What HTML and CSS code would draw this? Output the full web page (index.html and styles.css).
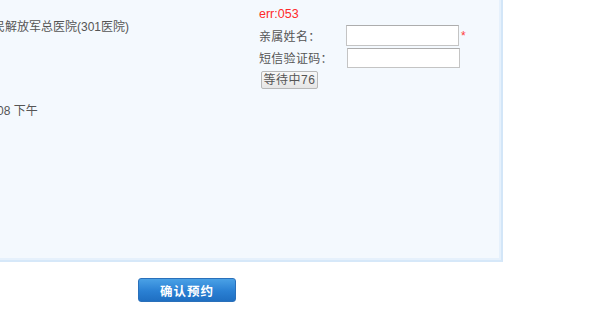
FILE: index.html
```html
<!DOCTYPE html>
<html>
<head>
<meta charset="utf-8">
<link rel="stylesheet" href="styles.css">
</head>
<body>
<div class="panel">
  <div class="left-col">
    <div class="info hospital"><span class="shift-a">中国人民解放军总医院(301医院)</span></div>
    <div class="info date"><span class="shift-b">2015-06-08 下午</span></div>
  </div>
  <div class="right-col">
    <div class="err">err:053</div>
    <div class="field">
      <label class="lbl">亲属姓名：</label>
      <input class="txt" type="text">
      <span class="req">*</span>
    </div>
    <div class="field">
      <label class="lbl">短信验证码：</label>
      <input class="txt txt-code" type="text">
    </div>
    <button class="wait-btn" type="button">等待中76</button>
  </div>
</div>
<div class="actions">
  <button class="confirm-btn" type="button">确认预约</button>
</div>
</body>
</html>
```
FILE: styles.css
```css
html, body {
  margin: 0;
  padding: 0;
  background: #ffffff;
  font-family: "Liberation Sans", "Noto Sans CJK SC", sans-serif;
  font-size: 12px;
  color: #555555;
  overflow: hidden;
}

.panel {
  display: flex;
  width: 501px;
  height: 260px;
  background: #f4f9fe;
  border-right: 2px solid #d3e6f8;
  border-bottom: 2px solid #d6e8f9;
  box-shadow: inset -2px -2px 0 #e6f1fc;
}

.left-col {
  width: 266px;
  margin-left: -7px;
  flex: none;
}

.info {
  line-height: 18px;
  white-space: nowrap;
}

.hospital {
  margin-top: 18px;
}

.date {
  margin-top: 66px;
}

.shift-a {
  display: inline-block;
  margin-left: -36px;
}

.shift-b {
  display: inline-block;
  margin-left: -44px;
}

.right-col {
  display: flex;
  flex-direction: column;
  align-items: flex-start;
  padding-top: 6px;
}

.err {
  color: #ff2a2a;
  font-size: 12.5px;
  line-height: 16px;
  margin-bottom: 3px;
}

.field {
  display: flex;
  align-items: center;
  height: 21px;
  margin-bottom: 1px;
}

.lbl {
  width: 87px;
  line-height: 21px;
  font-family: "Noto Sans CJK SC", sans-serif;
  font-size: 12px;
  letter-spacing: 0.3px;
}

.txt {
  box-sizing: border-box;
  width: 113px;
  height: 21px;
  margin: 0;
  padding: 0 2px;
  border: 1px solid #c4c4c4;
  border-top-color: #adadad;
  background: #ffffff;
}

.txt-code {
  margin-left: 1px;
  height: 20px;
}

.req {
  color: #ff3b3b;
  margin-left: 2px;
  font-size: 12px;
  line-height: 12px;
}

.wait-btn {
  margin: 2px 0 0 2px;
  height: 18px;
  width: 57px;
  padding: 0;
  font-family: "Liberation Sans", "Noto Sans CJK SC", sans-serif;
  font-size: 12px;
  line-height: 16px;
  color: #555555;
  letter-spacing: 0.5px;
  background: linear-gradient(#f8f8f8, #e6e6e6);
  border: 1px solid #b8b8b8;
  border-radius: 2px;
}

.actions {
  padding: 16px 0 0 138px;
}

.confirm-btn {
  width: 98px;
  height: 24px;
  padding: 0;
  font-family: "Liberation Sans", "Noto Sans CJK SC", sans-serif;
  font-size: 12.5px;
  font-weight: bold;
  color: #ffffff;
  background: linear-gradient(#4aa1e6, #2a80d3 55%, #1f6fc2);
  border: 1px solid #2a70ba;
  border-radius: 3px;
  letter-spacing: 1px;
}
```
